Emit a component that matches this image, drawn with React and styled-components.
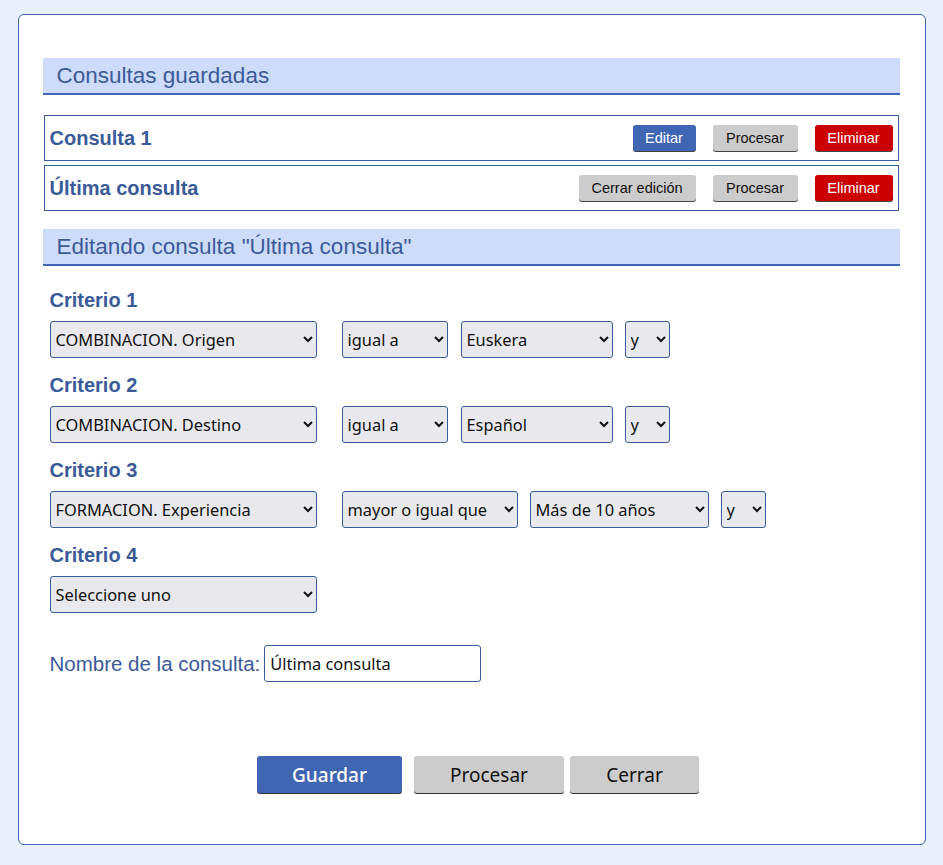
import styled, { createGlobalStyle } from "styled-components";

const GlobalStyle = createGlobalStyle`
  html, body {
    margin: 0;
    background: #eaf1fe;
  }
  body {
    padding: 14px 0 20px;
    font-family: "Liberation Sans", Arial, sans-serif;
  }
`;

const Card = styled.div`
  width: 857px;
  margin: 0 auto;
  padding: 43px 25px 51px 24px;
  background: #fff;
  border: 1px solid #4466b0;
  border-radius: 6px;
`;

const SectionTitle = styled.h2`
  margin: 0;
  height: 35px;
  display: flex;
  align-items: center;
  padding-left: 14px;
  background: #cddcfb;
  border-bottom: 2px solid #4066b3;
  color: #3d5a99;
  font-size: 22.5px;
  font-weight: normal;
`;

const SavedList = styled.div`
  display: flex;
  flex-direction: column;
  gap: 4px;
  margin: 20px 1px 18px 1px;
`;

const SavedRow = styled.div`
  height: 44px;
  display: flex;
  align-items: center;
  padding: 0 5px;
  border: 1px solid #3b5a98;
`;

const SavedName = styled.div`
  flex: 1;
  color: #3b5a98;
  font-size: 20px;
  font-weight: bold;
`;

const SmallButtons = styled.div`
  display: flex;
  gap: 17px;
`;

const colors = {
  primary: ["#4066b3", "#fff"],
  neutral: ["#cccccc", "#111"],
  danger: ["#cc0000", "#fff"],
};

const SmallButton = styled.button`
  height: 26px;
  padding: 0 12px;
  min-width: ${(p) => p.$w || 0}px;
  border: none;
  border-radius: 3px;
  box-shadow: 0 1px 0 #444;
  background: ${(p) => colors[p.$kind][0]};
  color: ${(p) => colors[p.$kind][1]};
  font-family: "Liberation Sans", Arial, sans-serif;
  font-size: 14.5px;
  cursor: pointer;
`;

const Editor = styled.div`
  padding: 23px 7px 0 7px;
`;

const Criterion = styled.div`
  display: flex;
  flex-direction: column;
  gap: 10px;
  margin-bottom: 16px;
`;

const CriterionLabel = styled.div`
  color: #3b5a98;
  font-size: 20px;
  font-weight: bold;
  line-height: 22px;
`;

const SelectRow = styled.div`
  display: flex;
  align-items: center;
`;

const Select = styled.select`
  width: ${(p) => p.$w}px;
  height: 37px;
  margin-left: ${(p) => p.$ml || 0}px;
  padding: 0 1px;
  background-color: #e9e9ed;
  border: 1px solid #3b5a98;
  border-radius: 3px;
  color: #111;
  font-family: "Noto Sans", "DejaVu Sans", sans-serif;
  font-size: 16.4px;
`;

const NameRow = styled.div`
  display: flex;
  align-items: center;
  gap: 4px;
  margin-top: 32px;
`;

const NameLabel = styled.label`
  color: #3b5a98;
  font-size: 20.5px;
`;

const NameInput = styled.input`
  width: 217px;
  height: 37px;
  box-sizing: border-box;
  padding: 0 5px;
  border: 1px solid #3b5a98;
  border-radius: 3px;
  font-family: "Noto Sans", "DejaVu Sans", sans-serif;
  font-size: 16.4px;
  color: #111;
`;

const Footer = styled.div`
  display: flex;
  justify-content: center;
  margin-top: 74px;
  padding-left: 14px;
`;

const BigButton = styled.button`
  width: ${(p) => p.$w}px;
  height: 37px;
  margin-left: ${(p) => p.$ml || 0}px;
  border: none;
  border-radius: 3px;
  box-shadow: 0 1px 0 #333;
  background: ${(p) => colors[p.$kind][0]};
  color: ${(p) => colors[p.$kind][1]};
  font-family: "Noto Sans", "DejaVu Sans", sans-serif;
  font-size: 19px;
  font-weight: ${(p) => (p.$kind === "primary" ? 500 : 400)};
  cursor: pointer;
`;

const saved = [
  { name: "Consulta 1", first: ["Editar", "primary", 63] },
  { name: "Última consulta", first: ["Cerrar edición", "neutral", 117] },
];

const criteria = [
  {
    label: "Criterio 1",
    selects: [
      ["COMBINACION. Origen", 267, 0],
      ["igual a", 106, 25],
      ["Euskera", 152, 13],
      ["y", 45, 12],
    ],
  },
  {
    label: "Criterio 2",
    selects: [
      ["COMBINACION. Destino", 267, 0],
      ["igual a", 106, 25],
      ["Español", 152, 13],
      ["y", 45, 12],
    ],
  },
  {
    label: "Criterio 3",
    selects: [
      ["FORMACION. Experiencia", 267, 0],
      ["mayor o igual que", 176, 25],
      ["Más de 10 años", 179, 12],
      ["y", 45, 12],
    ],
  },
  {
    label: "Criterio 4",
    selects: [["Seleccione uno", 267, 0]],
  },
];

export default function App() {
  return (
    <>
      <GlobalStyle />
      <Card>
        <SectionTitle>Consultas guardadas</SectionTitle>
        <SavedList>
          {saved.map((s) => (
            <SavedRow key={s.name}>
              <SavedName>{s.name}</SavedName>
              <SmallButtons>
                <SmallButton $kind={s.first[1]} $w={s.first[2]}>
                  {s.first[0]}
                </SmallButton>
                <SmallButton $kind="neutral" $w={85}>
                  Procesar
                </SmallButton>
                <SmallButton $kind="danger" $w={78}>
                  Eliminar
                </SmallButton>
              </SmallButtons>
            </SavedRow>
          ))}
        </SavedList>

        <SectionTitle>Editando consulta "Última consulta"</SectionTitle>
        <Editor>
          {criteria.map((c) => (
            <Criterion key={c.label}>
              <CriterionLabel>{c.label}</CriterionLabel>
              <SelectRow>
                {c.selects.map(([value, w, ml]) => (
                  <Select key={value} $w={w} $ml={ml} defaultValue={value}>
                    <option>{value}</option>
                  </Select>
                ))}
              </SelectRow>
            </Criterion>
          ))}
          <NameRow>
            <NameLabel htmlFor="nombre">Nombre de la consulta:</NameLabel>
            <NameInput id="nombre" defaultValue="Última consulta" />
          </NameRow>
        </Editor>

        <Footer>
          <BigButton $kind="primary" $w={145}>
            Guardar
          </BigButton>
          <BigButton $kind="neutral" $w={150} $ml={12}>
            Procesar
          </BigButton>
          <BigButton $kind="neutral" $w={129} $ml={6}>
            Cerrar
          </BigButton>
        </Footer>
      </Card>
    </>
  );
}
